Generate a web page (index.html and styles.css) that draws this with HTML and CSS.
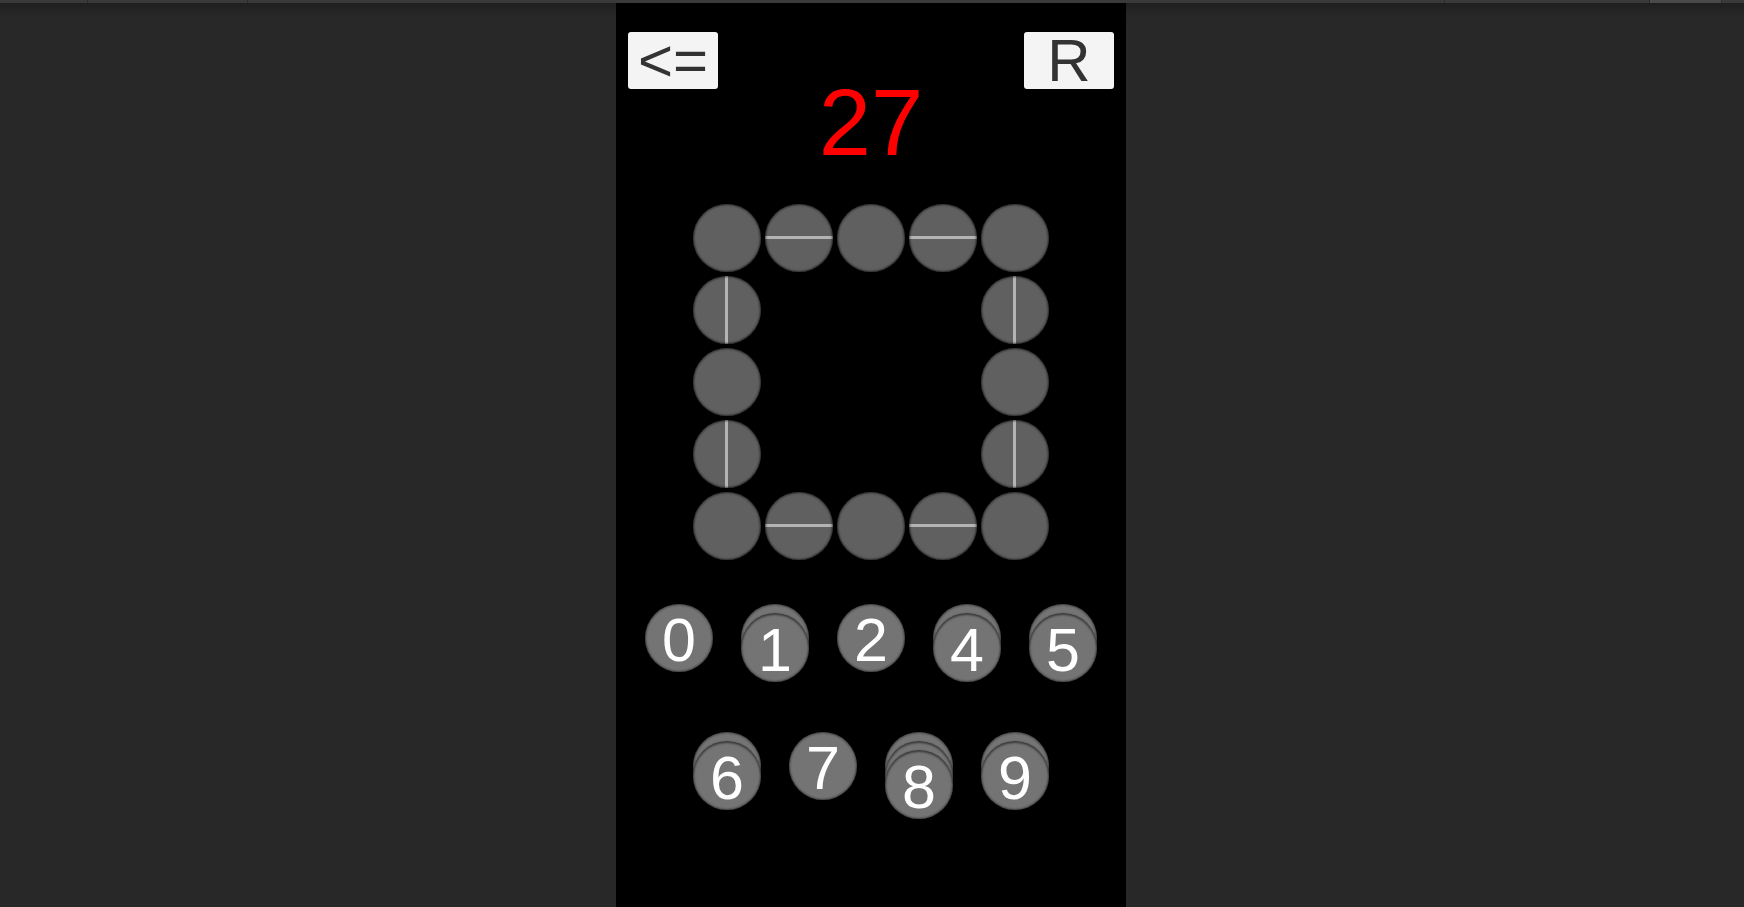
FILE: index.html
```html
<!DOCTYPE html>
<html lang="en">
<head>
<meta charset="utf-8">
<title>Puzzle</title>
<link rel="stylesheet" href="styles.css">
</head>
<body>
<div class="topbar">
  <div class="seg seg-a"></div>
  <div class="seg seg-b"></div>
  <div class="seg seg-c"></div>
  <div class="seg seg-d"></div>
  <div class="seg seg-e"></div>
  <div class="seg seg-f"></div>
</div>
<div class="stage">
  <main class="panel">
    <header class="header">
      <button class="btn btn-back">&lt;=</button>
      <button class="btn btn-reset">R</button>
    </header>
    <div class="score">27</div>

    <div class="board">
      <div class="dot"></div><div class="dot h"></div><div class="dot"></div><div class="dot h"></div><div class="dot"></div>
      <div class="dot v"></div><div class="gap"></div><div class="gap"></div><div class="gap"></div><div class="dot v"></div>
      <div class="dot"></div><div class="gap"></div><div class="gap"></div><div class="gap"></div><div class="dot"></div>
      <div class="dot v"></div><div class="gap"></div><div class="gap"></div><div class="gap"></div><div class="dot v"></div>
      <div class="dot"></div><div class="dot h"></div><div class="dot"></div><div class="dot h"></div><div class="dot"></div>
    </div>

    <div class="coins">
      <div class="coin-row">
        <div class="stack"><div class="coin">0</div></div>
        <div class="stack"><div class="coin"></div><div class="coin">1</div></div>
        <div class="stack"><div class="coin">2</div></div>
        <div class="stack"><div class="coin"></div><div class="coin">4</div></div>
        <div class="stack"><div class="coin"></div><div class="coin">5</div></div>
      </div>
      <div class="coin-row">
        <div class="stack"><div class="coin"></div><div class="coin">6</div></div>
        <div class="stack"><div class="coin">7</div></div>
        <div class="stack"><div class="coin"></div><div class="coin"></div><div class="coin">8</div></div>
        <div class="stack"><div class="coin"></div><div class="coin">9</div></div>
      </div>
    </div>
  </main>
</div>
</body>
</html>
```

FILE: styles.css
```css
* {
  box-sizing: border-box;
}

html, body {
  margin: 0;
  padding: 0;
  height: 907px;
  overflow: hidden;
  background: #282828;
  font-family: "Liberation Sans", Arial, sans-serif;
}

.topbar {
  display: flex;
  height: 3px;
  background: #3a3a3a;
}

.seg {
  height: 3px;
  border-right: 1px solid #2c2c2c;
}

.seg-a { width: 88px; }
.seg-b { width: 160px; }
.seg-c { width: 1197px; }
.seg-d { width: 205px; }
.seg-e { width: 72px; background: #4a4a4a; }
.seg-f { flex: 1; border-right: none; }

.stage {
  display: flex;
  justify-content: center;
  height: 904px;
  padding-right: 2px;
  background: linear-gradient(to bottom, #1f1f1f 0px, #282828 14px);
}

.panel {
  width: 510px;
  height: 904px;
  background: #000;
  display: flex;
  flex-direction: column;
  padding: 29px 12px 0;
}

.header {
  display: flex;
  justify-content: space-between;
  height: 57px;
}

.btn {
  width: 90px;
  height: 57px;
  padding: 0;
  border: none;
  border-radius: 3px;
  background: #f4f4f4;
  color: #333333;
  font-family: "Liberation Sans", Arial, sans-serif;
  font-size: 60px;
  line-height: 58px;
  text-align: center;
  overflow: visible;
}

.score {
  color: #ff0000;
  font-size: 94px;
  line-height: 67px;
  text-align: center;
}

.board {
  align-self: center;
  margin-top: 48px;
  display: grid;
  grid-template-columns: repeat(5, 68px);
  grid-auto-rows: 68px;
  gap: 4px;
}

.dot {
  border-radius: 50%;
  background-color: #606060;
  box-shadow: inset 0 0 2px 1px rgba(0, 0, 0, 0.55);
}

.dot.h {
  background-image: linear-gradient(to bottom,
    transparent calc(50% - 1.5px),
    #b4b4b4 calc(50% - 1.5px),
    #b4b4b4 calc(50% + 1.5px),
    transparent calc(50% + 1.5px));
}

.dot.v {
  background-image: linear-gradient(to right,
    transparent calc(50% - 1.5px),
    #b4b4b4 calc(50% - 1.5px),
    #b4b4b4 calc(50% + 1.5px),
    transparent calc(50% + 1.5px));
}

.coins {
  margin-top: 44px;
  display: flex;
  flex-direction: column;
}

.coin-row {
  display: flex;
  justify-content: center;
  align-items: flex-start;
  gap: 28px;
  height: 128px;
}

.stack {
  display: flex;
  flex-direction: column;
  width: 68px;
}

.coin {
  width: 68px;
  height: 68px;
  flex: none;
  border-radius: 50%;
  background: #747474;
  box-shadow: inset 0 0 2px 1px rgba(0, 0, 0, 0.45), 0 -1px 1px rgba(0, 0, 0, 0.55);
  color: #ffffff;
  font-size: 61px;
  line-height: 72px;
  text-align: center;
  overflow: visible;
}

.coin + .coin {
  margin-top: -58.5px;
}
```
